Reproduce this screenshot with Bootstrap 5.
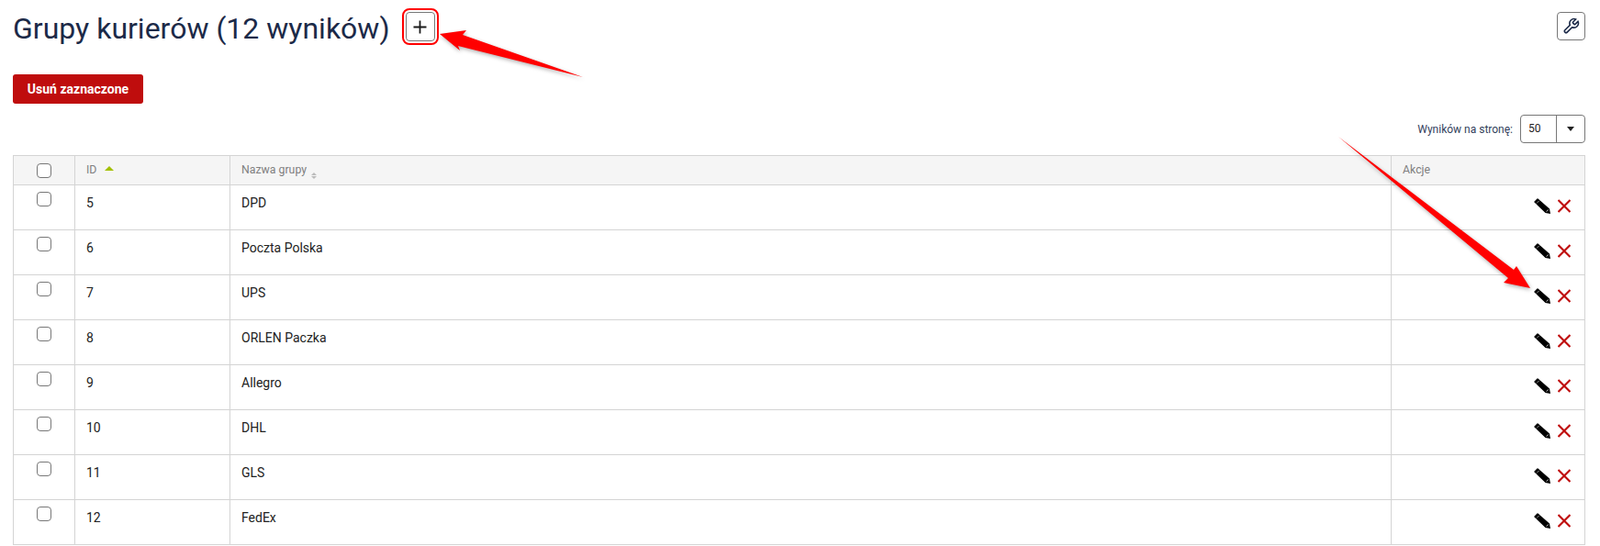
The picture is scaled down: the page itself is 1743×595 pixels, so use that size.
<!DOCTYPE html>
<html lang="pl">
<head>
  <meta charset="UTF-8">
  <title>Grupy kurierów</title>
  <link href="https://cdn.jsdelivr.net/npm/bootstrap@5.3.0/dist/css/bootstrap.min.css" rel="stylesheet">
  <style>
    html, body { height: 595px; overflow: hidden; }
    body { font-family: Roboto, "Liberation Sans", sans-serif; color: #212121; background: #fff; position: relative; }
    .page-wrap { padding: 0 16px 0 14px; }
    .title-row { height: 78px; padding-top: 13px; }
    .page-title { font-size: 32px; font-weight: 400; line-height: 36px; color: #1c2a48; margin: 0; }
    .square-btn { width: 31px; height: 31px; padding: 0; background: #fff; border: 1px solid #777; border-radius: 4px; color: #1c2a48; display: flex; align-items: center; justify-content: center; }
    .plus-btn { width: 32px; height: 32px; margin-left: 17px; outline: 2px solid #f00; outline-offset: 2px; }
    .del-btn { background: #bf0d0d; border: 0; color: #fff; font-size: 14px; font-weight: 700; width: 142px; height: 32px; padding: 0; border-radius: 3px; margin-top: 3px; }
    .per-page { height: 31px; margin-top: 12px; margin-bottom: 13px; font-size: 12px; color: #33415c; }
    .per-select { width: 71px; height: 31px; border: 1px solid #777; border-radius: 4px; margin-left: 8px; color: #222; font-size: 12px; }
    .per-value { width: 39px; padding-left: 8px; line-height: 29px; border-right: 1px solid #777; }
    .per-caret { flex: 1; display: flex; align-items: center; justify-content: center; }
    .per-caret i { border: 4px solid transparent; border-top: 5px solid #222; border-bottom: 0; }
    .couriers { table-layout: fixed; width: 100%; font-size: 14px; border-color: #d4d4d4; margin: 0; }
    .couriers th { background: #f5f5f5; color: #808080; font-size: 12.3px; font-weight: 400; height: 32px; padding: 0 12px; vertical-align: middle; box-shadow: none; }
    .couriers td { height: 49px; padding: 9px 12px 0; vertical-align: top; color: #222; line-height: 20px; }
    .couriers .check-cell { padding: 7px 0 0; text-align: center; }
    .couriers th.check-cell { padding: 0; }
    .box { display: block; width: 16px; height: 16px; margin: 0 auto; border: 1px solid #777; border-radius: 4px; background: #fff; appearance: none; }
    .sort-up { display: inline-block; margin-left: 6px; vertical-align: 3px; border: 5px solid transparent; border-bottom: 5px solid #a3c000; border-top: 0; }
    .sort-both { display: inline-flex; flex-direction: column; gap: 1px; margin-left: 2px; vertical-align: -2px; }
    .sort-both i { border: 3px solid transparent; }
    .sort-both i:first-child { border-bottom: 3px solid #bbb; border-top: 0; }
    .sort-both i:last-child { border-top: 3px solid #bbb; border-bottom: 0; }
    .action-cell { padding: 12px 15px 0 0 !important; line-height: 18px !important; }
    .arrows { position: absolute; left: 0; top: 0; pointer-events: none; filter: drop-shadow(1px 2px 2px rgba(0,0,0,.3)); }
  </style>
</head>
<body>
  <div class="page-wrap">
    <div class="title-row d-flex justify-content-between align-items-start">
      <div class="d-flex align-items-start">
        <h1 class="page-title">Grupy kurierów (12 wyników)</h1>
        <button class="square-btn plus-btn" type="button">
          <svg width="15" height="15" viewBox="0 0 15 15"><path d="M7.5 0.5v14M0.5 7.5h14" stroke="#1a1a1a" stroke-width="1.8"/></svg>
        </button>
      </div>
      <button class="square-btn" type="button">
        <svg width="19" height="19" viewBox="0 0 24 24" fill="none" stroke="#1c2a48" stroke-width="2"><path d="M14.7 6.3a1 1 0 0 0 0 1.4l1.6 1.6a1 1 0 0 0 1.4 0l3.77-3.77a6 6 0 0 1-7.94 7.94l-6.91 6.91a2.12 2.12 0 0 1-3-3l6.91-6.91a6 6 0 0 1 7.94-7.94l-3.76 3.76z"/></svg>
      </button>
    </div>

    <button class="del-btn d-block" type="button">Usuń zaznaczone</button>

    <div class="per-page d-flex justify-content-end align-items-center">
      Wyników na stronę:
      <div class="per-select d-flex">
        <div class="per-value">50</div>
        <div class="per-caret"><i></i></div>
      </div>
    </div>

    <table class="table table-bordered couriers">
      <colgroup><col style="width:67px"><col style="width:169px"><col><col style="width:211px"></colgroup>
      <thead>
        <tr>
          <th class="check-cell"><input class="box" type="checkbox"></th>
          <th>ID <span class="sort-up"></span></th>
          <th>Nazwa grupy <span class="sort-both"><i></i><i></i></span></th>
          <th>Akcje</th>
        </tr>
      </thead>
      <tbody id="rows"></tbody>
    </table>
  </div>

  <svg class="arrows" width="1743" height="595" viewBox="0 0 1743 595">
    <path d="M479 37 L508 33 L504 38 L635 84 L499 50 L501 55 Z" fill="#f00"/>
    <path d="M1458 149 L1649 294 L1652 290 L1667 314 L1638 308 L1643 303 Z" fill="#f00"/>
  </svg>

  <script>
    const groups = [[5, 'DPD'], [6, 'Poczta Polska'], [7, 'UPS'], [8, 'ORLEN Paczka'], [9, 'Allegro'], [10, 'DHL'], [11, 'GLS'], [12, 'FedEx']];
    const pencil = '<svg width="18" height="17" viewBox="0 0 18 17"><path d="M4.5 0.5 L17 11.5 L18 17 L12.5 16 L0.5 4.5 Q0 4 0.5 3.5 L3.5 0.5 Q4 0 4.5 0.5 Z" fill="#000"/><path d="M2 6.5 L6.5 2" stroke="#fff" stroke-width="1" stroke-dasharray="1 1"/><path d="M13.5 14.6 L15.8 12.6" stroke="#fff" stroke-width="0.8"/></svg>';
    const cross = '<svg class="ms-2" width="14" height="15" viewBox="0 0 14 15"><path d="M0.5 1 L13.5 14 M13.5 1 L0.5 14" stroke="#bf0d0d" stroke-width="2.2"/></svg>';
    document.getElementById('rows').innerHTML = groups.map(g => `
      <tr>
        <td class="check-cell"><input class="box" type="checkbox"></td>
        <td>${g[0]}</td>
        <td>${g[1]}</td>
        <td class="action-cell text-end">${pencil}${cross}</td>
      </tr>`).join('');
  </script>
  <script src="https://cdn.jsdelivr.net/npm/bootstrap@5.3.0/dist/js/bootstrap.bundle.min.js"></script>
</body>
</html>
